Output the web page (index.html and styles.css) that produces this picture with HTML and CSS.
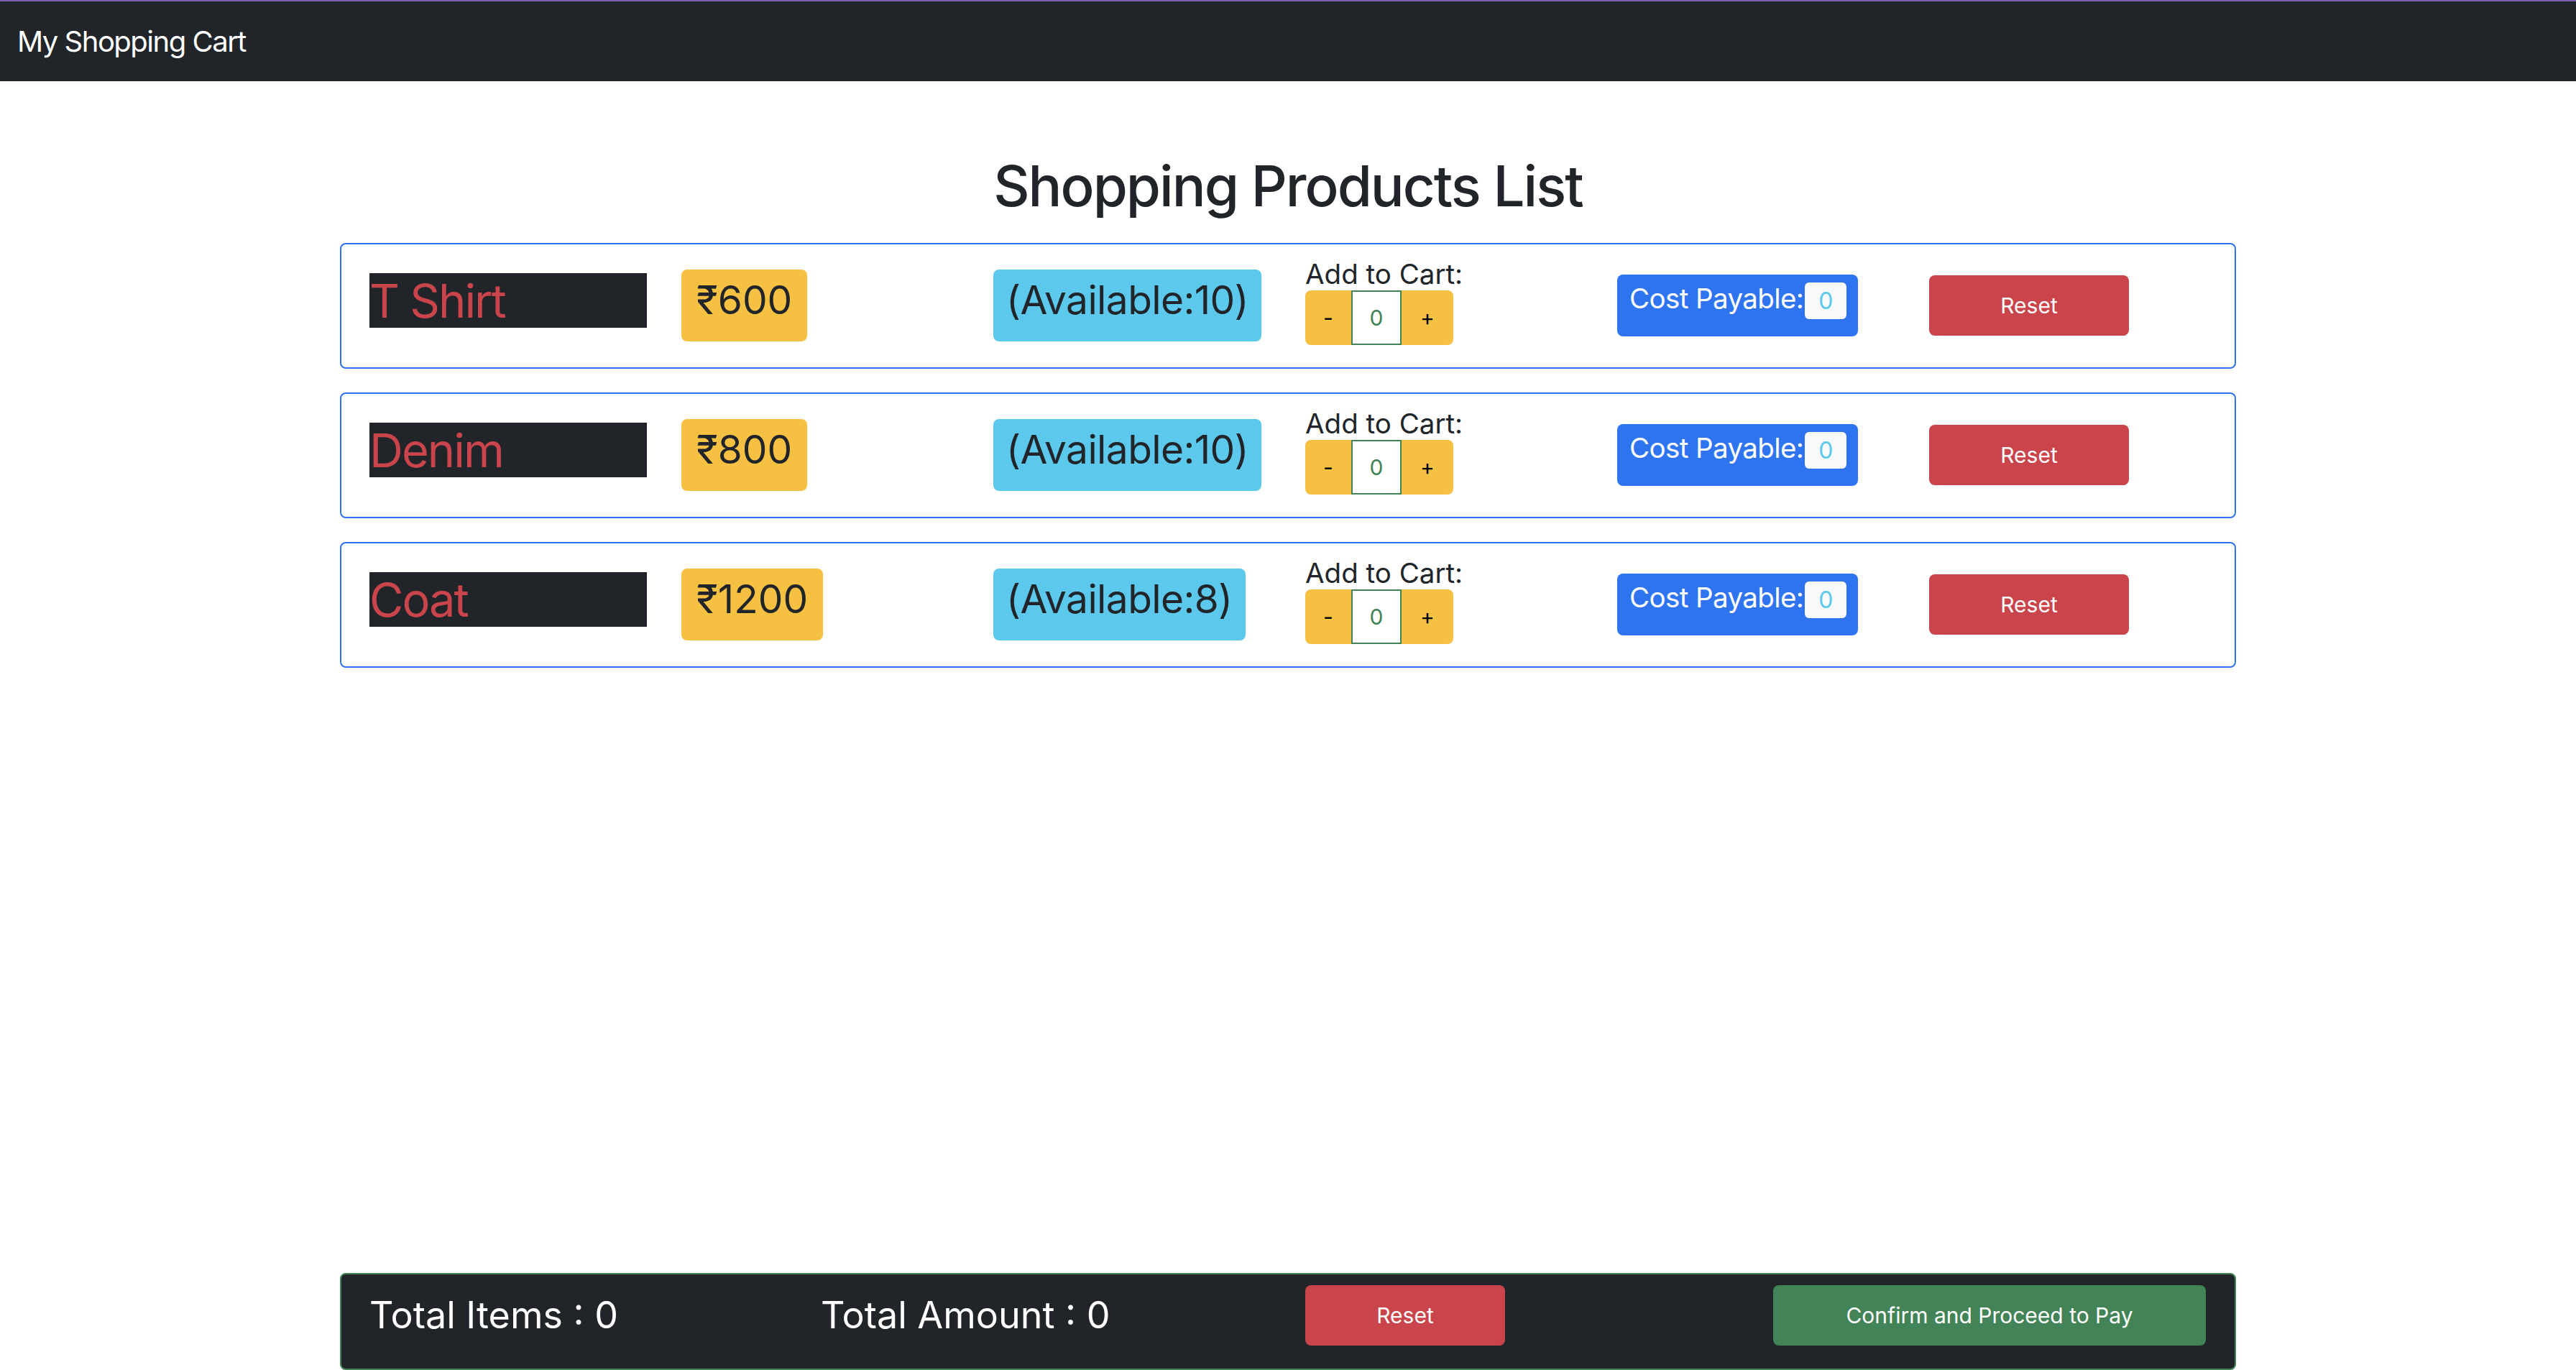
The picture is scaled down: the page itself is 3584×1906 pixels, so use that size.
FILE: index.html
```html
<!DOCTYPE html>
<html lang="en">
<head>
<meta charset="utf-8">
<title>My Shopping Cart</title>
<link rel="stylesheet" href="styles.css">
</head>
<body>
<nav class="navbar"><span class="brand">My Shopping Cart</span></nav>
<main class="main">
  <h1 class="title">Shopping Products List</h1>
  <div class="list">
    <div class="card">
      <div class="name">T Shirt</div>
      <div><span class="badge badge-warning">₹600</span></div>
      <div><span class="badge badge-info">(Available:10)</span></div>
      <div class="addcart">
        <div class="addcart-label">Add to Cart:</div>
        <div class="group"><button class="gbtn gbtn-left">-</button><input class="qty" value="0" readonly><button class="gbtn gbtn-right">+</button></div>
      </div>
      <div><span class="cost">Cost Payable:<span class="cost-val">0</span></span></div>
      <div><button class="btn btn-danger">Reset</button></div>
    </div>
    <div class="card">
      <div class="name">Denim</div>
      <div><span class="badge badge-warning">₹800</span></div>
      <div><span class="badge badge-info">(Available:10)</span></div>
      <div class="addcart">
        <div class="addcart-label">Add to Cart:</div>
        <div class="group"><button class="gbtn gbtn-left">-</button><input class="qty" value="0" readonly><button class="gbtn gbtn-right">+</button></div>
      </div>
      <div><span class="cost">Cost Payable:<span class="cost-val">0</span></span></div>
      <div><button class="btn btn-danger">Reset</button></div>
    </div>
    <div class="card">
      <div class="name">Coat</div>
      <div><span class="badge badge-warning">₹1200</span></div>
      <div><span class="badge badge-info">(Available:8)</span></div>
      <div class="addcart">
        <div class="addcart-label">Add to Cart:</div>
        <div class="group"><button class="gbtn gbtn-left">-</button><input class="qty" value="0" readonly><button class="gbtn gbtn-right">+</button></div>
      </div>
      <div><span class="cost">Cost Payable:<span class="cost-val">0</span></span></div>
      <div><button class="btn btn-danger">Reset</button></div>
    </div>
  </div>
</main>
<footer class="footer">
  <div class="total">Total Items : 0</div>
  <div class="total">Total Amount : 0</div>
  <div><button class="btn btn-danger">Reset</button></div>
  <div><button class="btn btn-success">Confirm and Proceed to Pay</button></div>
</footer>
</body>
</html>
```
FILE: styles.css
```css
* { box-sizing: border-box; }
html, body { margin: 0; padding: 0; }
body {
  font-family: "Inter", "Noto Sans", "DejaVu Sans", sans-serif;
  color: #212529;
  background: #fff;
  min-height: 100vh;
  display: flex;
  flex-direction: column;
}
.navbar {
  border-top: 2px solid #7c61ae;
  background: #212529;
  height: 113px;
  display: flex;
  align-items: center;
  padding-left: 24px;
}
.brand {
  color: #fff;
  font-size: 40px;
  line-height: 60px;
  letter-spacing: -1.5px;
}
.main {
  padding-top: 99px;
}
.title {
  margin: 0 0 32px;
  text-align: center;
  font-size: 78px;
  font-weight: 500;
  line-height: 1.2;
  letter-spacing: -2px;
  color: #212529;
}
.list {
  width: 2638px;
  margin: 0 auto;
  display: flex;
  flex-direction: column;
  gap: 33px;
}
.card {
  height: 175px;
  border: 2px solid #2e73ef;
  border-radius: 8px;
  display: grid;
  grid-template-columns: repeat(5, 434px) 1fr;
  align-items: center;
  padding-left: 39px;
}
.name {
  width: 386px;
  height: 76px;
  background: #212529;
  color: #ca444b;
  font-size: 65px;
  line-height: 78px;
  letter-spacing: -2px;
  margin-bottom: 15px;
  white-space: nowrap;
}
.badge {
  display: inline-block;
  font-size: 55px;
  line-height: 66px;
  padding: 9px 18px 25px;
  border-radius: 8px;
  color: #212529;
  white-space: nowrap;
}
.badge-warning { background: #f6c142; padding-left: 21px; padding-right: 21px; }
.badge-info { background: #5bc8ec; letter-spacing: -0.6px; }
.addcart {
  margin-bottom: 13px;
}
.addcart-label {
  font-size: 38.5px;
  line-height: 46px;
  color: #212529;
}
.group {
  display: flex;
  height: 76px;
}
.gbtn {
  border: 0;
  background: #f6c142;
  color: #000;
  font-family: inherit;
  font-size: 30px;
  padding: 0;
  margin: 0;
}
.gbtn-left { width: 64px; border-radius: 8px 0 0 8px; }
.gbtn-right { width: 72px; border-radius: 0 8px 8px 0; }
.qty {
  width: 70px;
  height: 76px;
  border: 2px solid #428457;
  background: #fff;
  color: #428457;
  text-align: center;
  font-family: inherit;
  font-size: 30px;
  padding: 0;
  margin: 0;
  outline: none;
}
.cost {
  display: inline-flex;
  align-items: flex-start;
  background: #2e73ef;
  color: #fff;
  border-radius: 8px;
  padding: 11px 16px 24px 17px;
  font-size: 38.5px;
  line-height: 44px;
  letter-spacing: -0.6px;
  white-space: nowrap;
}
.cost-val {
  display: inline-block;
  width: 58px;
  height: 51px;
  margin-left: 2px;
  background: #f8f9fa;
  color: #5bc8ec;
  border-radius: 6px;
  font-size: 32px;
  line-height: 51px;
  letter-spacing: 0;
  text-align: center;
}
.btn {
  border: 0;
  height: 84px;
  border-radius: 8px;
  color: #fff;
  font-family: inherit;
  font-size: 30px;
  padding: 0;
  margin: 0;
}
.btn-danger { background: #ca444b; width: 278px; }
.btn-success { background: #428457; width: 602px; }
.footer {
  margin: auto auto 0;
  width: 2638px;
  height: 135px;
  background: #212529;
  border: 2px solid #428457;
  border-radius: 8px;
  display: grid;
  grid-template-columns: 628px 674px 651px 1fr;
  align-items: start;
  padding: 15px 0 0 39px;
}
.total {
  color: #fff;
  font-size: 52px;
  line-height: 84px;
  white-space: nowrap;
}
```
